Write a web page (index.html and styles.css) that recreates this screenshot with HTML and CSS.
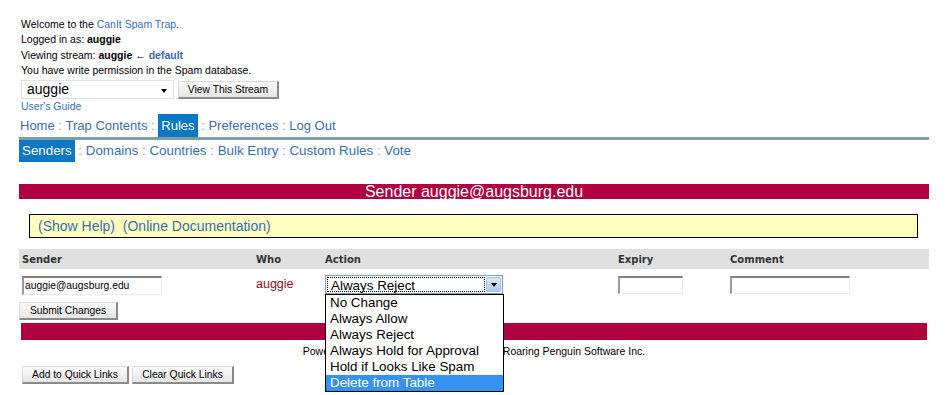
FILE: index.html
```html
<!doctype html>
<html>
<head>
<meta charset="utf-8">
<title>CanIt - Rules - Senders</title>
<link rel="stylesheet" href="styles.css">
</head>
<body>
<div class="page">
	<div class="intro">
		<p>Welcome to the <a href="#">CanIt Spam Trap</a>.</p>
		<p>Logged in as: <b>auggie</b></p>
		<p>Viewing stream: <b>auggie</b> &larr; <a href="#" class="strong">default</a></p>
		<p>You have write permission in the Spam database.</p>
		<div class="stream-row">
			<div class="stream-select">auggie<span class="caret"></span></div>
			<button class="btn">View This Stream</button>
		</div>
		<a href="#" class="guide">User's Guide</a>
	</div>

	<div class="tabs"><a href="#">Home</a><span class="sep"> : </span><a href="#">Trap Contents</a><span class="sep"> : </span><a href="#" class="on">Rules</a><span class="sep"> : </span><a href="#">Preferences</a><span class="sep"> : </span><a href="#">Log Out</a></div>
	<div class="subtabs"><a href="#" class="on">Senders</a><span class="sep"> : </span><a href="#">Domains</a><span class="sep"> : </span><a href="#">Countries</a><span class="sep"> : </span><a href="#">Bulk Entry</a><span class="sep"> : </span><a href="#">Custom Rules</a><span class="sep"> : </span><a href="#">Vote</a></div>

	<div class="bar title">Sender auggie@augsburg.edu</div>

	<div class="help"><a href="#">(Show Help)</a>&nbsp; <a href="#">(Online Documentation)</a></div>

	<div class="rules">
		<div class="rules-head">
			<div class="cell">Sender</div>
			<div class="cell">Who</div>
			<div class="cell">Action</div>
			<div class="cell">Expiry</div>
			<div class="cell">Comment</div>
		</div>
		<div class="rules-row">
			<div class="cell"><div class="field sender">auggie@augsburg.edu</div></div>
			<div class="cell who">auggie</div>
			<div class="cell">
				<div class="action">
					<div class="action-value"><span class="focus">Always Reject</span><span class="drop"><span class="caret"></span></span></div>
					<ul class="options">
						<li>No Change</li>
						<li>Always Allow</li>
						<li>Always Reject</li>
						<li>Always Hold for Approval</li>
						<li>Hold if Looks Like Spam</li>
						<li class="hover">Delete from Table</li>
					</ul>
				</div>
			</div>
			<div class="cell"><div class="field expiry"></div></div>
			<div class="cell"><div class="field comment"></div></div>
		</div>
	</div>

	<button class="btn submit">Submit Changes</button>

	<div class="bar bottom"></div>

	<p class="footer">Powered by CanIt. Copyright &copy; 2003-2011 Roaring Penguin Software Inc.</p>

	<div class="quick">
		<button class="btn">Add to Quick Links</button>
		<button class="btn">Clear Quick Links</button>
	</div>
</div>
</body>
</html>
```

FILE: styles.css
```css
*{margin:0;padding:0;box-sizing:border-box;}
ul{list-style:none;}
body{background:#fff;color:#000;font-family:"Liberation Sans",Arial,sans-serif;font-size:10.5px;}
a{color:#3a6cb4;text-decoration:none;}

.page{padding:16.5px 23px 12px 19px;min-height:395px;}

/* header */
.intro{padding-left:2px;}
.intro p{line-height:15.5px;}
.intro a.strong{font-weight:bold;}
.stream-row{display:flex;align-items:flex-end;margin-top:1.5px;}
.stream-select{position:relative;width:153px;height:19px;border:1px solid #e2e2e2;font-size:14px;line-height:17px;padding-left:5px;}
.stream-select .caret{position:absolute;right:6px;top:8px;}
.caret{display:block;width:0;height:0;border-left:3.5px solid transparent;border-right:3.5px solid transparent;border-top:4px solid #000;}
.guide{display:block;line-height:13px;margin-top:1px;}

.btn{font-family:"Liberation Sans",Arial,sans-serif;font-size:10.3px;color:#000;height:18px;padding:0 10px;background:linear-gradient(#fbfbfb,#e6e6e6);border:1px solid #dcdcdc;border-right:2px solid #8a8a8a;border-bottom:2px solid #8a8a8a;}
.stream-row .btn{margin-left:4px;width:101px;padding:0;}

/* tabs */
.tabs,.subtabs{font-size:13px;color:#999;}
.tabs{line-height:23px;padding-left:1px;margin-top:1px;border-bottom:3px solid #7d9ea4;}
.subtabs{line-height:22px;font-size:13.33px;}
.tabs a,.subtabs a{display:inline-block;}
.tabs a.on,.subtabs a.on{background:#0b77c5;color:#fff;padding:0 3px;}

/* bars */
.bar{background:#b0003f;}
.title{margin-top:22px;height:15px;line-height:15px;font-size:16px;color:#fff;text-align:center;}
.bottom{height:17px;margin:3px 2px 0 2px;}

.help{margin:15px 11px 0 10px;height:24px;border:1px solid #000;background:#ffffc0;font-size:14px;line-height:22px;padding-left:8px;}

/* rules table */
.rules{margin-top:11px;}
.rules-head,.rules-row{display:grid;grid-template-columns:234px 69px 293px 112px 1fr;}
.rules-head{background:#e0e0e0;height:20px;line-height:21px;font-family:"DejaVu Sans",Verdana,sans-serif;font-weight:bold;font-size:10px;color:#333;}
.rules-row{padding-top:6px;height:26px;align-items:start;}
.cell{padding-left:3px;}
.field{height:19px;margin-top:1px;border:1px solid #ececec;border-top:2px solid #808080;border-left:2px solid #9a9a9a;font-size:10.3px;line-height:15px;padding-left:1px;}
.sender{width:140px;}
.expiry{width:65px;height:18px;}
.comment{width:120px;height:18px;}
.who{color:#9b0a1f;font-size:12.5px;line-height:19px;}

.action{position:relative;width:178px;}
.action-value{display:flex;height:19px;border:1px solid #7f9db9;padding:1px;font-size:13.4px;line-height:15px;}
.focus{flex:1;border:1px dotted #000;padding-left:3px;}
.drop{width:15px;margin-left:1px;display:flex;align-items:center;justify-content:center;background:linear-gradient(#dbe8fb,#b2cbef);border:1px solid #a6bde4;border-radius:2px;}
.options{position:absolute;left:0;top:19px;width:179px;z-index:2;background:#fff;border:1px solid #000;font-size:13.4px;line-height:16px;}
.options li{padding-left:4px;height:16px;}
.options li.hover{background:#3592ee;color:#fff;}

.submit{margin-top:7px;width:99px;padding:0;}

.footer{margin-top:4px;line-height:14px;text-align:center;}

.quick{margin-top:8px;padding-left:3px;display:flex;gap:3px;}
.quick .btn:first-child{width:107px;padding:0;}
.quick .btn:last-child{width:102px;padding:0;}
```
